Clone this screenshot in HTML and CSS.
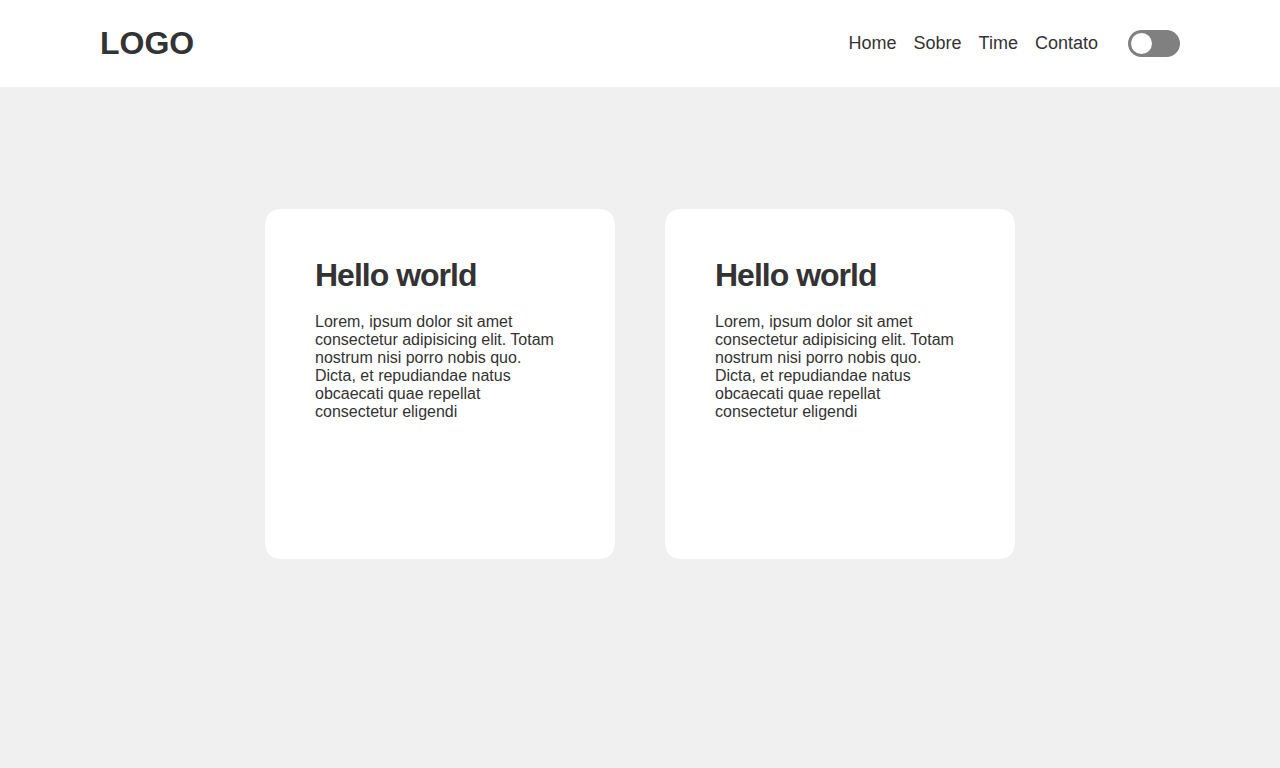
FILE: index.html
```html
<!DOCTYPE html>
<html lang="pt">
<head>
<meta charset="utf-8">
<title>Page</title>
<link rel="stylesheet" href="styles.css">
</head>
<body>
<header class="header">
  <div class="header-inner">
    <div class="logo">LOGO</div>
    <nav class="nav">
      <a href="#" class="nav-link">Home</a>
      <a href="#" class="nav-link">Sobre</a>
      <a href="#" class="nav-link">Time</a>
      <a href="#" class="nav-link">Contato</a>
      <span class="toggle"><span class="knob"></span></span>
    </nav>
  </div>
</header>
<main class="main">
  <div class="card">
    <h2 class="card-title">Hello world</h2>
    <p class="card-text">Lorem, ipsum dolor sit amet consectetur adipisicing elit. Totam nostrum nisi porro nobis quo. Dicta, et repudiandae natus obcaecati quae repellat consectetur eligendi</p>
  </div>
  <div class="card">
    <h2 class="card-title">Hello world</h2>
    <p class="card-text">Lorem, ipsum dolor sit amet consectetur adipisicing elit. Totam nostrum nisi porro nobis quo. Dicta, et repudiandae natus obcaecati quae repellat consectetur eligendi</p>
  </div>
</main>
</body>
</html>
```
FILE: styles.css
```css
* { box-sizing: border-box; }
html, body { margin: 0; padding: 0; }
body {
  font-family: "Liberation Sans", Arial, sans-serif;
  background: #f0f0f0;
  color: #333;
  height: 768px;
  overflow: hidden;
}
.header {
  background: #fff;
  height: 87px;
}
.header-inner {
  width: 1080px;
  margin: 0 auto;
  height: 100%;
  display: flex;
  align-items: center;
  justify-content: space-between;
}
.logo {
  font-size: 32px;
  font-weight: bold;
  color: #333;
}
.nav {
  display: flex;
  align-items: center;
  gap: 17px;
}
.nav-link {
  font-size: 18px;
  color: #333;
  text-decoration: none;
}
.toggle {
  margin-left: 13px;
  width: 52px;
  height: 27px;
  border-radius: 14px;
  background: #808080;
  display: flex;
  align-items: center;
  padding-left: 3px;
}
.knob {
  width: 21px;
  height: 21px;
  border-radius: 50%;
  background: #fff;
}
.main {
  display: flex;
  justify-content: center;
  gap: 50px;
  padding-top: 122px;
}
.card {
  width: 350px;
  height: 350px;
  background: #fff;
  border-radius: 15px;
  padding: 50px;
}
.card-title {
  margin: 0 0 22px;
  font-size: 32px;
  font-weight: bold;
  line-height: 32px;
  letter-spacing: -1px;
}
.card-text {
  margin: 0;
  font-size: 16px;
  line-height: 18px;
}
```
